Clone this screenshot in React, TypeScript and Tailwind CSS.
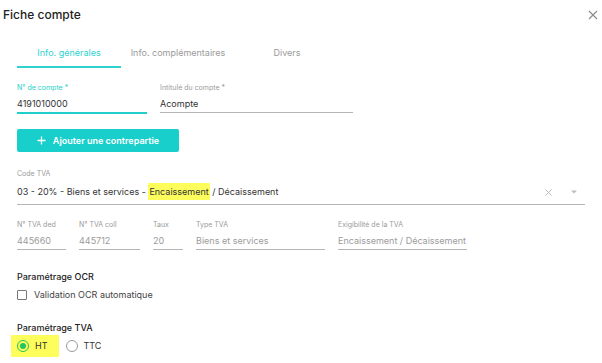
import React from "react";

const Field = ({
  label,
  value,
  width,
  active,
  muted,
}: {
  label: string;
  value: string;
  width: string;
  active?: boolean;
  muted?: boolean;
}) => {
  return (
    <div className={`flex flex-col ${width}`}>
      <span
        className={`text-[7px] leading-[10px] whitespace-nowrap ${active ? "text-[#1fcfca]" : "text-[#9a9a9a]"}`}
      >
        {label}
      </span>
      <span
        className={`mt-[5px] text-[9px] leading-[12px] whitespace-nowrap ${muted ? "text-[#9b9b9b]" : "text-[#333]"}`}
      >
        {value}
      </span>
      <div
        className={`mt-[2px] ${active ? "h-[2px] bg-[#1fcfca]" : "h-px bg-[#b5b5b5]"}`}
      />
    </div>
  );
};

export default function App() {
  return (
    <div
      className="w-[602px] h-[363px] bg-white overflow-hidden text-[#333]"
      style={{ fontFamily: "Inter, 'Noto Sans', sans-serif" }}
    >
      {/* header */}
      <div className="flex items-center justify-between h-[30px] pl-[3px] pr-[4px]">
        <span className="text-[12px] font-medium text-[#222]">Fiche compte</span>
        <svg width="10" height="10" viewBox="0 0 10 10" className="text-[#8a8a8a]">
          <path d="M1 1 L9 9 M9 1 L1 9" stroke="currentColor" strokeWidth="1.1" />
        </svg>
      </div>

      {/* tabs */}
      <div className="flex gap-[5px] ml-[17px] mt-[11px]">
        <div className="w-[104px] flex flex-col items-center">
          <span className="text-[9px] leading-[24px] text-[#2fd2ce]">Info. générales</span>
          <div className="w-full h-[2px] bg-[#2fd2ce] mt-[1px]" />
        </div>
        <div className="w-[104px] flex flex-col items-center">
          <span className="text-[9px] leading-[24px] text-[#9a9a9a]">Info. complémentaires</span>
        </div>
        <div className="w-[104px] flex flex-col items-center">
          <span className="text-[9px] leading-[24px] text-[#9a9a9a]">Divers</span>
        </div>
      </div>

      <div className="pl-[17px] pr-[17px]">
        {/* account row */}
        <div className="flex items-start gap-[13px] mt-[15px]">
          <Field label="N° de compte *" value="4191010000" width="w-[130px]" active />
          <Field label="Intitulé du compte *" value="Acompte" width="w-[193px]" />
        </div>

        {/* button */}
        <button className="mt-[15px] w-[162px] h-[23px] bg-[#19cfcb] rounded-[2px] flex items-center justify-center gap-[7px] text-white text-[9px] font-semibold">
          <svg width="9" height="9" viewBox="0 0 9 9">
            <path d="M4.5 0.5 V8.5 M0.5 4.5 H8.5" stroke="white" strokeWidth="1.3" />
          </svg>
          Ajouter une contrepartie
        </button>

        {/* code TVA */}
        <div className="mt-[17px] flex flex-col w-[568px]">
          <span className="text-[7px] leading-[10px] text-[#9a9a9a]">Code TVA</span>
          <div className="flex items-center mt-[5px] h-[16px]">
            <span className="text-[9px] leading-[12px] text-[#333] flex-1 whitespace-nowrap">
              03 - 20% - Biens et services -{" "}
              <span className="bg-[#fdfd5c] px-[1px] py-[3px]">Encaissement</span> / Décaissement
            </span>
            <svg width="7" height="7" viewBox="0 0 7 7" className="mr-[19px] text-[#bdbdbd]">
              <path d="M0.5 0.5 L6.5 6.5 M6.5 0.5 L0.5 6.5" stroke="currentColor" strokeWidth="1" />
            </svg>
            <svg width="6" height="4" viewBox="0 0 6 4" className="mr-[8px] text-[#bdbdbd]">
              <path d="M0 0.5 L6 0.5 L3 3.5 Z" fill="currentColor" />
            </svg>
          </div>
          <div className="h-px bg-[#b5b5b5] mt-[4px]" />
        </div>

        {/* TVA row */}
        <div className="flex items-start gap-[13px] mt-[15px]">
          <Field label="N° TVA ded" value="445660" width="w-[49px]" muted />
          <Field label="N° TVA coll" value="445712" width="w-[61px]" muted />
          <Field label="Taux" value="20" width="w-[30px]" muted />
          <Field label="Type TVA" value="Biens et services" width="w-[129px]" muted />
          <Field label="Exigibilité de la TVA" value="Encaissement / Décaissement" width="w-[129px]" muted />
        </div>

        {/* OCR */}
        <div className="mt-[21px] text-[9px] font-medium text-[#222] leading-[12px]">
          Paramétrage OCR
        </div>
        <label className="flex items-center gap-[7px] mt-[6px] h-[12px]">
          <span className="w-[10px] h-[10px] border border-[#777] rounded-[1px]" />
          <span className="text-[9px] text-[#444]">Validation OCR automatique</span>
        </label>

        {/* TVA params */}
        <div className="mt-[21px] text-[9px] font-medium text-[#222] leading-[12px]">
          Paramétrage TVA
        </div>
        <div className="flex items-center mt-[1px] -ml-[6px]">
          <div className="flex items-center gap-[6px] bg-[#fdfd5c] h-[22px] pl-[6px] pr-[11px]">
            <span className="w-[12px] h-[12px] rounded-full border-[1.5px] border-[#22c55e] flex items-center justify-center">
              <span className="w-[6px] h-[6px] rounded-full bg-[#22c55e]" />
            </span>
            <span className="text-[9px] text-[#333]">HT</span>
          </div>
          <div className="flex items-center gap-[6px] ml-[7px]">
            <span className="w-[12px] h-[12px] rounded-full border border-[#9a9a9a]" />
            <span className="text-[9px] text-[#333]">TTC</span>
          </div>
        </div>
      </div>
    </div>
  );
}
